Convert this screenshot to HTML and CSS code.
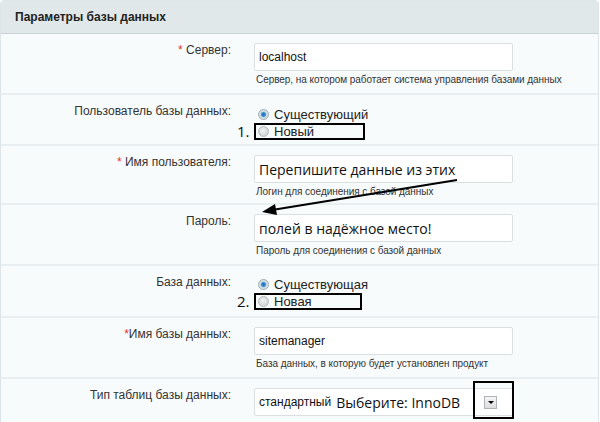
FILE: index.html
```html
<!DOCTYPE html>
<html>
  <head>
    <meta charset="utf-8">
    <link rel="stylesheet" href="styles.css">
  </head>
  <body>
    <div class="panel">
      <div class="panel-head">Параметры базы данных</div>

      <!-- server -->
      <div class="row">
        <div class="label"><span class="req">*</span> Сервер:</div>
        <div class="field">
          <div class="input">localhost</div>
          <div class="hint">Сервер, на котором работает система управления базами данных</div>
        </div>
      </div>

      <div class="row row-radio">
        <div class="label">Пользователь базы данных:</div>
        <div class="field radios">
          <div class="radio"><span class="dot checked"></span>Существующий</div>
          <div class="radio boxed box-user"><span class="num">1.</span><span class="dot"></span>Новый</div>
        </div>
      </div>

      <div class="row row-user">
        <div class="label"><span class="req">*</span> Имя пользователя:</div>
        <div class="field">
          <div class="input"><span class="note">Перепишите данные из этих</span></div>
          <div class="hint">Логин для соединения с базой данных</div>
        </div>
      </div>

      <div class="row row-pass">
        <div class="label">Пароль:</div>
        <div class="field">
          <div class="input"><span class="note">полей в надёжное место!</span></div>
          <div class="hint">Пароль для соединения с базой данных</div>
        </div>
      </div>

      <div class="row row-radio row-db">
        <div class="label">База данных:</div>
        <div class="field radios">
          <div class="radio"><span class="dot checked"></span>Существующая</div>
          <div class="radio boxed box-db"><span class="num">2.</span><span class="dot"></span>Новая</div>
        </div>
      </div>

      <div class="row">
        <div class="label"><span class="req">*</span>Имя базы данных:</div>
        <div class="field">
          <div class="input">sitemanager</div>
          <div class="hint">База данных, в которую будет установлен продукт</div>
        </div>
      </div>

      <div class="row row-last">
        <div class="label">Тип таблиц базы данных:</div>
        <div class="field">
          <div class="input select">
            <span>стандартный</span>
            <span class="note">Выберите: InnoDB</span>
            <span class="arrow-btn"></span>
            <span class="select-mark"></span>
          </div>
        </div>
      </div>

      <svg class="pointer" width="600" height="422" viewBox="0 0 600 422">
        <line x1="457" y1="180" x2="272" y2="210" stroke="#000" stroke-width="2"/>
        <polygon points="262,212 275,204 277,215" fill="#000"/>
      </svg>
    </div>
  </body>
</html>
```

FILE: styles.css
```css
body {
  margin: 0;
  font-family: "Liberation Sans", Arial, sans-serif;
  color: #333;
  background: #fff;
}
.panel {
  position: relative;
  width: 597px;
  height: 440px;
  border: 1px solid #dde5e8;
  border-radius: 4px 4px 0 0;
  background: #f8fbfc;
  overflow: hidden;
}
.panel-head {
  height: 32px;
  line-height: 32px;
  padding-left: 14px;
  font-size: 12px;
  font-weight: bold;
  color: #222;
  background: #e1e8ea;
  border-bottom: 1px solid #c9d2d5;
}
.row {
  display: grid;
  grid-template-columns: 230px 1fr;
  column-gap: 23px;
  height: 61px;
  border-bottom: 2px solid #e9eef0;
  box-sizing: border-box;
}
.row-radio { height: 51px; }
.row-user { height: 59px; }
.row-pass { height: 61px; }
.row-db { height: 52px; }
.row-last { height: 60px; }
.label {
  text-align: right;
  font-size: 12px;
  line-height: 14px;
  padding-top: 9px;
  color: #333;
}
.req { color: #e3342a; }
.field { padding-top: 9px; }
.input {
  box-sizing: border-box;
  width: 259px;
  height: 28px;
  padding: 0 4px;
  display: flex;
  align-items: center;
  font-size: 12px;
  color: #111;
  background: #fff;
  border: 1px solid #dadfe1;
  border-radius: 2px;
}
.note {
  font-family: "Open Sans", "DejaVu Sans", sans-serif;
  font-size: 14px;
  color: #111;
}
.select .note { margin-left: 5px; }
.arrow-btn {
  margin-left: auto;
  margin-right: 11px;
  width: 11px;
  height: 11px;
  border: 1px solid #aeb3b5;
  background: linear-gradient(#f6f6f6, #dcdcdc);
  position: relative;
}
.arrow-btn::after {
  content: "";
  position: absolute;
  left: 3px;
  top: 4px;
  border-left: 3px solid transparent;
  border-right: 3px solid transparent;
  border-top: 3px solid #000;
}
.select-mark {
  position: absolute;
  left: 472px;
  top: 380px;
  width: 37px;
  height: 34px;
  border: 2px solid #000;
}
.hint {
  margin-top: 3px;
  font-size: 10px;
  line-height: 12px;
  color: #333;
  padding-left: 2px;
  letter-spacing: -0.05px;
}
.radios { padding-top: 12px; }
.radio {
  display: flex;
  align-items: center;
  height: 15px;
  font-size: 13px;
  color: #222;
  padding-left: 4px;
}
.row-db .radios { padding-top: 11px; }
.dot {
  box-sizing: border-box;
  width: 11px;
  height: 11px;
  margin-right: 5px;
  border-radius: 50%;
  border: 1px solid #b4b9bb;
  background: radial-gradient(circle at 45% 40%, #f2f2f2, #cfd2d3 80%);
}
.dot.checked {
  background: radial-gradient(circle, #1d6cb5 0, #3f8fd2 2px, #c4d6e2 3px, #e6eaec 5px);
  border-color: #9eabb2;
}
.boxed {
  position: relative;
  box-sizing: border-box;
  margin-top: 1px;
  height: 17px;
  border: 2px solid #000;
  padding-left: 2px;
}
.box-user { width: 111px; }
.box-db { width: 108px; }
.num {
  position: absolute;
  left: -19px;
  top: -2px;
  font-family: "Open Sans", "DejaVu Sans", sans-serif;
  font-size: 15px;
  line-height: 17px;
  color: #111;
}
.pointer {
  position: absolute;
  left: -1px;
  top: -1px;
  pointer-events: none;
}
```
